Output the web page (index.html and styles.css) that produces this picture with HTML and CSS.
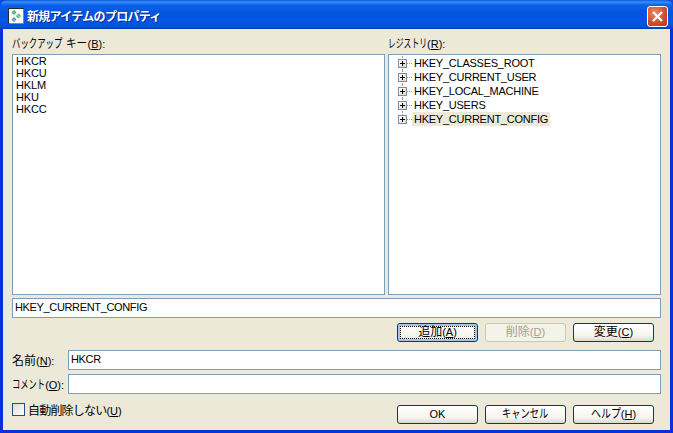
FILE: index.html
```html
<!DOCTYPE html>
<html lang="ja">
<head>
<meta charset="utf-8">
<title>新規アイテムのプロパティ</title>
<link rel="stylesheet" href="styles.css">
</head>
<body>
<div class="window">
  <div class="titlebar">
    <svg class="appicon" width="16" height="16" viewBox="0 0 16 16"><rect x="0.5" y="0.5" width="15" height="15" fill="#fdfdfa" stroke="#2a2a2a"/><path d="M15.5 1v14.5H1" fill="none" stroke="#8a8a80"/><path d="M6 2l2.5 2.5L6 7 3.500 4.500z" fill="#35a86a"/><path d="M10.500 5.500L13 8l-2.500 2.500L8 8z" fill="#47b98a"/><path d="M6 9l2.500 2.500L6 14l-2.500-2.500z" fill="#3f8fc8"/><path d="M5 3.500l2 2M5 10.500l2 2M9.500 7l2 2" stroke="#c8f0d0" fill="none"/></svg>
    <span class="title">新規アイテムのプロパティ</span>
    <div class="close"><svg width="13" height="13" viewBox="0 0 13 13"><path d="M2 2l9 9M11 2l-9 9" stroke="#fff" stroke-width="2.4" fill="none"/></svg></div>
  </div>
  <div class="client">
    <div class="lists">
      <div class="col col-left">
        <label class="lbl"><span class="sq k-backup">バックアップ</span><span class="sq k-key">キー</span>(<u>B</u>):</label>
        <div class="box list">
          <div>HKCR</div><div>HKCU</div><div>HKLM</div><div>HKU</div><div>HKCC</div>
        </div>
      </div>
      <div class="col col-right">
        <label class="lbl"><span class="sq k-reg">レジストリ</span>(<u>R</u>):</label>
        <div class="box tree">
          <div class="node"><span class="exp"></span><span class="dash"></span><span class="txt">HKEY_CLASSES_ROOT</span></div>
          <div class="node"><span class="exp"></span><span class="dash"></span><span class="txt">HKEY_CURRENT_USER</span></div>
          <div class="node"><span class="exp"></span><span class="dash"></span><span class="txt">HKEY_LOCAL_MACHINE</span></div>
          <div class="node"><span class="exp"></span><span class="dash"></span><span class="txt">HKEY_USERS</span></div>
          <div class="node last"><span class="exp"></span><span class="dash"></span><span class="txt sel">HKEY_CURRENT_CONFIG</span></div>
        </div>
      </div>
    </div>
    <div class="box field path">HKEY_CURRENT_CONFIG</div>
    <div class="btnrow top">
      <button class="btn default"><span class="focus"><span class="cj">追加</span>(<u>A</u>)</span></button>
      <button class="btn w2" disabled><span class="cap"><span class="cj">削除</span>(<u>D</u>)</span></button>
      <button class="btn"><span class="cap"><span class="cj">変更</span>(<u>C</u>)</span></button>
    </div>
    <div class="formrow name"><label class="flbl"><span class="cj">名前</span>(<u>N</u>):</label><div class="box field grow">HKCR</div></div>
    <div class="formrow comment"><label class="flbl"><span class="sq k-comment">コメント</span>(<u>O</u>):</label><div class="box field grow"></div></div>
    <div class="bottom">
      <div class="check"><span class="cb"></span><span><span class="cj tight">自動削除しない</span>(<u>U</u>)</span></div>
      <div class="btnrow">
        <button class="btn"><span class="cap">OK</span></button>
        <button class="btn w2"><span class="cap"><span class="sq k-cancel">キャンセル</span></span></button>
        <button class="btn"><span class="cap"><span class="sq k-help">ヘルプ</span>(<u>H</u>)</span></button>
      </div>
    </div>
  </div>
</div>
</body>
</html>
```
FILE: styles.css
```css
* { box-sizing: border-box; }
html, body { margin: 0; padding: 0; }
body {
  width: 673px; height: 433px; overflow: hidden; background: #0a4bdc;
  font-family: "Liberation Sans", "Noto Sans CJK JP", sans-serif;
  font-size: 11px; color: #000;
}
.window {
  width: 673px; height: 433px; display: flex; flex-direction: column;
  background: #0831d9; border-radius: 7px 7px 0 0; overflow: hidden;
}
.titlebar {
  height: 29px; flex: none; display: flex; align-items: center; padding: 0 5px 0 8px;
  background: linear-gradient(#0a5ae0 0, #3b8dfb 2px, #0a62ea 5px, #0455e0 12px, #0456e6 22px, #0350d8 27px, #0237b8 29px);
}
.appicon { flex: none; margin-top: 2px; }
.title {
  margin: 2px 0 0 3px; color: #fff; font-weight: 700; font-size: 12px; letter-spacing: -0.7px; flex: 1;
  text-shadow: 1px 1px 0 #0a2a8c; font-family: "Noto Sans CJK JP", sans-serif;
}
.close {
  width: 21px; height: 21px; border: 1px solid #fff; border-radius: 3px; margin-top: 3px;
  background: radial-gradient(circle at 35% 30%, #e8866a, #d2492a 60%, #b8351c);
  display: flex; align-items: center; justify-content: center;
}
.client {
  margin: 0 3px 3px; flex: 1; min-height: 0; background: #ece9d8;
  padding: 8px 9px 6px; display: flex; flex-direction: column;
}
.lists { display: flex; gap: 3px; height: 258px; flex: none; }
.col { display: flex; flex-direction: column; }
.col-left { width: 373px; }
.col-right { width: 273px; }
.lbl { height: 17px; flex: none; line-height: 14px; }
.cj { font-size: 12px; }
.tight { letter-spacing: -0.8px; }
.sq { display: inline-block; font-size: 12px; transform-origin: left center; }
.k-backup { transform: scaleX(.7); margin-right: -21.6px; }
.k-key { transform: scaleX(.88); margin: 0 -2.900px 0 4px; }
.k-reg { transform: scaleX(.65); margin-right: -21px; }
.k-comment { transform: scaleX(.69); margin-right: -14.900px; }
.k-cancel { transform: scaleX(.77); margin-right: -13.800px; }
.k-help { transform: scaleX(.83); margin-right: -6.100px; }
.box { background: #fff; border: 1px solid #7f9db9; }
.list { flex: 1; padding: 0 3px; line-height: 12px; font-size: 11px; letter-spacing: -0.15px; }
.tree { flex: 1; padding: 1px 0 0 9px; font-size: 11px; letter-spacing: -0.25px; }
.node { height: 14px; display: flex; align-items: center; position: relative; }
.exp {
  width: 9px; height: 9px; flex: none; border: 1px solid #7a8ea6; position: relative; background: linear-gradient(135deg, #fff, #dcd9c8);
  z-index: 1;
}
.exp::before { content: ""; position: absolute; left: 1px; right: 1px; top: 3px; height: 1px; background: #000; }
.exp::after { content: ""; position: absolute; top: 1px; bottom: 1px; left: 3px; width: 1px; background: #000; }
.node::before { content: ""; position: absolute; left: 4px; top: 0; bottom: 0; border-left: 1px dotted #999; }
.node.last::before { bottom: 7px; }
.dash { width: 5px; border-top: 1px dotted #999; flex: none; }
.txt { padding: 0 2px; line-height: 14px; }
.sel { background: #ece9d8; }
.field { height: 20px; line-height: 17px; padding: 0 2px; letter-spacing: -0.35px; }
.path { margin-top: 3px; flex: none; }
.btnrow { display: flex; gap: 7px; }
.btnrow.top { margin-top: 5px; padding-left: 385px; }
.btn {
  width: 81px; height: 19px; padding: 0; border: 1px solid #003c74; border-radius: 3px;
  background: linear-gradient(#fff, #f5f4ee 70%, #dcd8cc);
  font: inherit; color: #000; display: flex; align-items: center; justify-content: center;
}
.btn.w2 { width: 81px; }
.btn.default { box-shadow: inset 0 0 0 2px #a9c4ea; }
.focus { width: 75px; height: 13px; line-height: 10px; border: 1px dotted #000; display: block; text-align: center; }
.cap { display: block; line-height: 14px; margin-top: -2px; }
.btn:disabled { border-color: #c9c7ba; background: #f4f3ea; color: #a1a192; }
.formrow { display: flex; align-items: center; height: 20px; flex: none; }
.name { margin-top: 8px; }
.comment { margin-top: 4px; }
.flbl { width: 56px; flex: none; white-space: nowrap; margin-top: -2px; }
.grow { flex: 1; }
.bottom { display: flex; justify-content: space-between; align-items: flex-start; margin-top: 11px; padding-right: 7px; }
.check { display: flex; align-items: center; gap: 3px; height: 13px; margin-top: -2px; }
.cb { width: 13px; height: 13px; border: 1px solid #1c5180; background: linear-gradient(135deg, #dcdcd7, #fff); flex: none; }
```
